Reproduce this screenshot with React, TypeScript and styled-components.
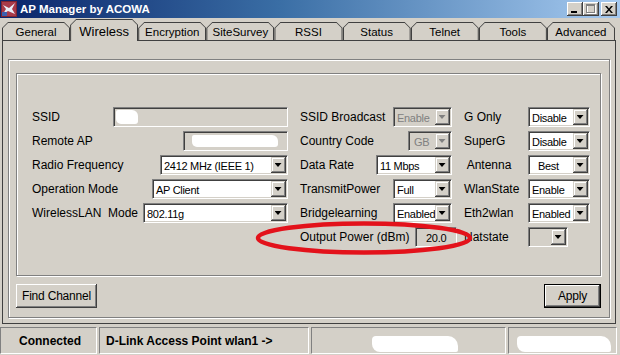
import React from 'react';
import styled, { createGlobalStyle } from 'styled-components';

const FACE = '#D4D0C8';
const SHADOW = '#808080';
const DARK = '#404040';

const Global = createGlobalStyle`
  html, body { margin: 0; padding: 0; background: ${FACE}; }
  body { font-family: "Liberation Sans", Arial, sans-serif; font-size: 12px; color: #000; }
  * { box-sizing: border-box; }
`;

const Window = styled.div`
  position: relative;
  width: 620px;
  height: 355px;
  overflow: hidden;
  background: ${FACE};
  display: flex;
  flex-direction: column;
`;

const TitleBar = styled.div`
  height: 18px;
  flex: none;
  display: flex;
  align-items: center;
  padding: 0 3px 0 1px;
  background: linear-gradient(to right, #0a246a 0%, #3a6ea5 45%, #a6caf0 100%);
`;

const AppIcon = styled.svg`
  width: 16px;
  height: 16px;
  flex: none;
`;

const Title = styled.span`
  flex: 1;
  margin-left: 3px;
  color: #fff;
  font-weight: bold;
  font-size: 11.5px;
  white-space: nowrap;
`;

const CaptionButtons = styled.div`
  display: flex;
  align-items: center;
`;

const CaptionButton = styled.div<{ $gap?: boolean }>`
  width: 16px;
  height: 14px;
  margin-left: ${p => (p.$gap ? '2px' : '0')};
  background: ${FACE};
  box-shadow: inset -1px -1px ${DARK}, inset 1px 1px #fff, inset -2px -2px ${SHADOW};
  display: flex;
  align-items: center;
  justify-content: center;
`;

const TabStrip = styled.div`
  height: 22px;
  flex: none;
  display: flex;
  align-items: flex-end;
  padding: 0 5px 0 2px;
  position: relative;
  z-index: 1;
`;

const Tab = styled.div<{ $active?: boolean }>`
  flex: 1;
  height: ${p => (p.$active ? 22 : 18)}px;
  margin-bottom: ${p => (p.$active ? '-1px' : '0')};
  background: ${DARK};
  padding: 1px 1px 0 1px;
  clip-path: polygon(0 100%, 0 6px, 6px 0, calc(100% - 6px) 0, 100% 6px, 100% 100%);
`;

const TabFace = styled.div<{ $active?: boolean }>`
  height: 100%;
  background: ${FACE};
  clip-path: polygon(0 100%, 0 5px, 5px 0, calc(100% - 5px) 0, 100% 5px, 100% 100%);
  display: flex;
  align-items: center;
  justify-content: center;
  font-size: ${p => (p.$active ? 13 : 11.5)}px;
  padding-top: ${p => (p.$active ? 1 : 0)}px;
`;

const TabPanel = styled.div`
  height: 284px;
  flex: none;
  margin: 0 4px 0 2px;
  border: 1px solid ${DARK};
  padding: 18px 5px 5px 5px;
`;

const OuterFrame = styled.div`
  height: 259px;
  border: 1px solid ${SHADOW};
  box-shadow: inset 1px 1px #fff, 1px 1px #fff;
  padding: 13px 8px 0 7px;
`;

const InnerBox = styled.div`
  height: 203px;
  border: 1px solid ${SHADOW};
  box-shadow: inset 1px 1px #fff, 1px 1px #fff;
  padding: 31px 0 0 15px;
  display: flex;
  flex-direction: column;
`;

const Row = styled.div`
  height: 24px;
  display: flex;
  align-items: center;
`;

const Cell = styled.div<{ $w: number; $mr?: number }>`
  width: ${p => p.$w}px;
  margin-right: ${p => p.$mr ?? 0}px;
  flex: none;
  display: flex;
  align-items: center;
  justify-content: space-between;
`;

const RightCell = styled.div`
  width: 126px;
  flex: none;
  display: flex;
  align-items: center;
`;

const Label = styled.span<{ $w?: number }>`
  white-space: pre;
  font-size: 12px;
  ${p => (p.$w ? `width: ${p.$w}px; flex: none;` : '')}
`;

const Sunken = styled.div<{ $w: number; $bg?: string; $mr?: number }>`
  width: ${p => p.$w}px;
  height: 20px;
  flex: none;
  margin-right: ${p => p.$mr ?? 0}px;
  display: flex;
  align-items: center;
  background: ${p => p.$bg ?? '#fff'};
  border: 1px solid;
  border-color: ${SHADOW} #fff #fff ${SHADOW};
  box-shadow: inset 1px 1px ${DARK}, inset -1px -1px ${FACE};
  padding: 1px;
`;

const FieldText = styled.span<{ $disabled?: boolean; $pl?: number }>`
  flex: 1;
  min-width: 0;
  white-space: pre;
  overflow: hidden;
  font-size: 11px;
  letter-spacing: -0.3px;
  padding-top: 1px;
  padding-left: ${p => p.$pl ?? 2}px;
  color: ${p => (p.$disabled ? SHADOW : '#000')};
`;

const DropButton = styled.div`
  width: 15px;
  height: 16px;
  flex: none;
  background: ${FACE};
  box-shadow: inset -1px -1px ${DARK}, inset 1px 1px ${FACE}, inset -2px -2px ${SHADOW}, inset 2px 2px #fff;
  display: flex;
  align-items: center;
  justify-content: center;
`;

const Arrow = styled.span<{ $disabled?: boolean }>`
  width: 7px;
  height: 4px;
  margin-left: -1px;
  background: ${p => (p.$disabled ? SHADOW : '#000')};
  clip-path: polygon(0 0, 100% 0, 50% 100%);
`;

const Blob = styled.span<{ $ml: number; $w: number; $h: number }>`
  margin-left: ${p => p.$ml}px;
  width: ${p => p.$w}px;
  height: ${p => p.$h}px;
  background: #fff;
  border-radius: 2px 6px 3px 5px;
  flex: none;
`;

const ButtonRow = styled.div`
  margin-top: 8px;
  display: flex;
  justify-content: space-between;
`;

const Button = styled.div<{ $w: number; $default?: boolean }>`
  width: ${p => p.$w}px;
  height: 24px;
  background: ${FACE};
  display: flex;
  align-items: center;
  justify-content: center;
  font-size: 12px;
  letter-spacing: -0.2px;
  border: ${p => (p.$default ? `1px solid #000` : 'none')};
  box-shadow: inset -1px -1px ${DARK}, inset 1px 1px #fff, inset -2px -2px ${SHADOW};
`;

const StatusBar = styled.div`
  height: 29px;
  margin-top: 2px;
  flex: none;
  display: flex;
  gap: 2px;
  padding: 1px 3px 0 0;
`;

const StatusPanel = styled.div<{ $w?: number; $pl?: number }>`
  ${p => (p.$w ? `width: ${p.$w}px; flex: none;` : 'flex: 1;')}
  height: 27px;
  border: 1px solid;
  border-color: ${SHADOW} #fff #fff ${SHADOW};
  display: flex;
  align-items: center;
  padding-left: ${p => p.$pl ?? 0}px;
  font-weight: bold;
  font-size: 12px;
  white-space: pre;
`;

const StatusBlob = styled.span<{ $ml: number; $w: number }>`
  margin-left: ${p => p.$ml}px;
  margin-top: 6px;
  width: ${p => p.$w}px;
  height: 16px;
  background: #fff;
  border-radius: 4px 10px 2px 8px;
`;

const Overlay = styled.svg`
  position: absolute;
  left: 0;
  top: 0;
  width: 620px;
  height: 355px;
  pointer-events: none;
`;

type Sel = { w: number; text: string; disabled?: boolean; gray?: boolean; pl?: number };

const Select = ({ w, text, disabled, gray, pl }: Sel) => (
  <Sunken $w={w} $bg={disabled || gray ? FACE : '#fff'}>
    <FieldText $disabled={disabled} $pl={pl}>{text}</FieldText>
    <DropButton>
      <Arrow $disabled={disabled} />
    </DropButton>
  </Sunken>
);

const tabs = ['General', 'Wireless', 'Encryption', 'SiteSurvey', 'RSSI', 'Status', 'Telnet', 'Tools', 'Advanced'];

export default function App() {
  return (
    <>
      <Global />
      <Window>
        <TitleBar>
          <AppIcon viewBox="0 0 16 16">
            <rect x="0" y="0" width="16" height="16" fill="#7b2433" />
            <rect x="1" y="1" width="14" height="14" fill="#a83a4a" />
            <polygon points="2,4 8,7 14,2 11,8 14,13 7,10 2,13 5,8" fill="#e8eef8" />
            <rect x="1" y="11" width="5" height="4" fill="#3b5fb0" />
          </AppIcon>
          <Title>AP Manager by ACOWA</Title>
          <CaptionButtons>
            <CaptionButton>
              <svg width="8" height="8" viewBox="0 0 8 8">
                <rect x="0" y="6" width="6" height="2" fill="#000" />
              </svg>
            </CaptionButton>
            <CaptionButton>
              <svg width="10" height="10" viewBox="0 0 10 10">
                <rect x="1.5" y="1.5" width="8" height="8" fill="none" stroke="#fff" />
                <rect x="1" y="1" width="8" height="1" fill="#fff" />
                <rect x="0.5" y="0.5" width="8" height="8" fill="none" stroke={SHADOW} />
                <rect x="0" y="1" width="9" height="1" fill={SHADOW} />
              </svg>
            </CaptionButton>
            <CaptionButton $gap>
              <svg width="8" height="7" viewBox="0 0 8 7">
                <path d="M0 0 L2 0 L4 2.5 L6 0 L8 0 L5 3.5 L8 7 L6 7 L4 4.5 L2 7 L0 7 L3 3.5 Z" fill="#000" />
              </svg>
            </CaptionButton>
          </CaptionButtons>
        </TitleBar>

        <TabStrip>
          {tabs.map(t => (
            <Tab key={t} $active={t === 'Wireless'}>
              <TabFace $active={t === 'Wireless'}>{t}</TabFace>
            </Tab>
          ))}
        </TabStrip>

        <TabPanel>
          <OuterFrame>
            <InnerBox>
              <Row>
                <Cell $w={256} $mr={12}>
                  <Label>SSID</Label>
                  <Sunken $w={175} $bg={FACE}>
                    <Blob $ml={1} $w={22} $h={14} />
                  </Sunken>
                </Cell>
                <Cell $w={152} $mr={12}>
                  <Label>SSID Broadcast</Label>
                  <Select w={59} text="Enable" disabled />
                </Cell>
                <RightCell>
                  <Label $w={64}>G Only</Label>
                  <Select w={62} text="Disable" />
                </RightCell>
              </Row>
              <Row>
                <Cell $w={256} $mr={12}>
                  <Label>Remote AP</Label>
                  <Sunken $w={105} $bg={FACE}>
                    <Blob $ml={7} $w={86} $h={12} />
                  </Sunken>
                </Cell>
                <Cell $w={152} $mr={12}>
                  <Label>Country Code</Label>
                  <Select w={44} text="GB" disabled pl={4} />
                </Cell>
                <RightCell>
                  <Label $w={64}>SuperG</Label>
                  <Select w={62} text="Disable" />
                </RightCell>
              </Row>
              <Row>
                <Cell $w={256} $mr={12}>
                  <Label>Radio Frequency</Label>
                  <Select w={128} text="2412 MHz (IEEE 1)" />
                </Cell>
                <Cell $w={152} $mr={12}>
                  <Label>Data Rate</Label>
                  <Select w={76} text="11 Mbps" />
                </Cell>
                <RightCell>
                  <Label $w={64}> Antenna</Label>
                  <Select w={62} text="Best" pl={8} />
                </RightCell>
              </Row>
              <Row>
                <Cell $w={256} $mr={12}>
                  <Label>Operation Mode</Label>
                  <Select w={136} text="AP Client" />
                </Cell>
                <Cell $w={152} $mr={12}>
                  <Label>TransmitPower</Label>
                  <Select w={59} text="Full" />
                </Cell>
                <RightCell>
                  <Label $w={64}>WlanState</Label>
                  <Select w={62} text="Enable" />
                </RightCell>
              </Row>
              <Row>
                <Cell $w={256} $mr={12}>
                  <Label>WirelessLAN  Mode</Label>
                  <Select w={145} text="802.11g" />
                </Cell>
                <Cell $w={152} $mr={12}>
                  <Label>Bridgelearning</Label>
                  <Select w={59} text="Enabled" />
                </Cell>
                <RightCell>
                  <Label $w={64}>Eth2wlan</Label>
                  <Select w={62} text="Enabled" />
                </RightCell>
              </Row>
              <Row>
                <Cell $w={256} $mr={12} />
                <Cell $w={152} $mr={12}>
                  <Label>Output Power (dBm)</Label>
                  <Sunken $w={42} $bg={FACE} $mr={-5}>
                    <FieldText $pl={9}>20.0</FieldText>
                  </Sunken>
                </Cell>
                <RightCell>
                  <Label $w={64}>Natstate</Label>
                  <Select w={40} text="" gray />
                </RightCell>
              </Row>
            </InnerBox>
            <ButtonRow>
              <Button $w={81}>Find Channel</Button>
              <Button $w={57} $default>Apply</Button>
            </ButtonRow>
          </OuterFrame>
        </TabPanel>

        <StatusBar>
          <StatusPanel $w={97} $pl={18}>Connected</StatusPanel>
          <StatusPanel $w={210} $pl={6}>D-Link Access Point wlan1 -&gt;</StatusPanel>
          <StatusPanel $w={195}>
            <StatusBlob $ml={60} $w={86} />
          </StatusPanel>
          <StatusPanel>
            <StatusBlob $ml={8} $w={94} />
          </StatusPanel>
        </StatusBar>

        <Overlay viewBox="0 0 620 355">
          <ellipse cx="364" cy="238" rx="106" ry="14.5" fill="none" stroke="#e3121b" strokeWidth="4.5" />
        </Overlay>
      </Window>
    </>
  );
}
